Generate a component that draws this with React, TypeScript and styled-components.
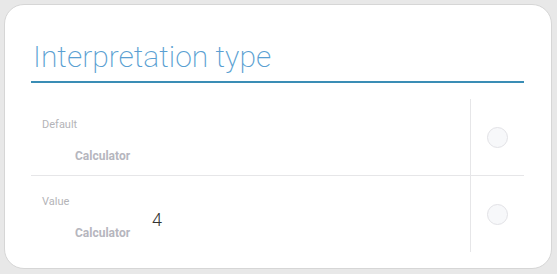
import React from 'react';
import styled, { createGlobalStyle } from 'styled-components';

const Global = createGlobalStyle`
    html, body {
        margin: 0;
        padding: 0;
        background: #e8e8e8;
        font-family: Roboto, "Liberation Sans", sans-serif;
    }
`;

const Page = styled.div`
    width: 557px;
    height: 274px;
    padding: 4px 5px 5px 4px;
    box-sizing: border-box;
`;

const Card = styled.div`
    height: 100%;
    background: #ffffff;
    border: 1px solid #d6d6d6;
    border-radius: 20px;
    box-sizing: border-box;
    padding: 30px 27px 0 26px;
`;

const Title = styled.div`
    font-size: 30px;
    font-weight: 200;
    color: #5a9fd2;
    line-height: 44px;
    padding-left: 2px;
    border-bottom: 2px solid #3a8db5;
    height: 48px;
    box-sizing: border-box;
`;

const Table = styled.div`
    margin-top: 16px;
    display: flex;
    flex-direction: column;
`;

const Row = styled.div<{ last?: boolean }>`
    display: flex;
    height: 76px;
    border-bottom: ${p => (p.last ? 'none' : '1px solid #e6e6e8')};
`;

const Content = styled.div`
    flex: 1;
    padding: 19px 0 0 11px;
    display: flex;
    flex-direction: column;
`;

const Label = styled.div`
    font-size: 11px;
    color: #b4b4b8;
    line-height: 13px;
`;

const ValueLine = styled.div`
    display: flex;
    align-items: flex-start;
    margin-top: 18px;
    padding-left: 33px;
`;

const Name = styled.div`
    font-size: 12px;
    font-weight: 700;
    color: #b6b6be;
    line-height: 14px;
`;

const Amount = styled.div`
    font-size: 18px;
    font-weight: 300;
    color: #333333;
    line-height: 18px;
    margin-left: 22px;
    margin-top: -15px;
`;

const RadioCell = styled.div`
    width: 53px;
    border-left: 1px solid #e6e6e8;
    display: flex;
    align-items: center;
    justify-content: center;
`;

const Radio = styled.div`
    width: 19px;
    height: 19px;
    border-radius: 50%;
    border: 1.5px solid #e2e2e6;
    background: #f7f8fa;
`;

const App = () => {
    return (
        <Page>
            <Global />
            <Card>
                <Title>Interpretation type</Title>
                <Table>
                    <Row>
                        <Content>
                            <Label>Default</Label>
                            <ValueLine>
                                <Name>Calculator</Name>
                            </ValueLine>
                        </Content>
                        <RadioCell>
                            <Radio />
                        </RadioCell>
                    </Row>
                    <Row last>
                        <Content>
                            <Label>Value</Label>
                            <ValueLine>
                                <Name>Calculator</Name>
                                <Amount>4</Amount>
                            </ValueLine>
                        </Content>
                        <RadioCell>
                            <Radio />
                        </RadioCell>
                    </Row>
                </Table>
            </Card>
        </Page>
    );
};

export default App;
